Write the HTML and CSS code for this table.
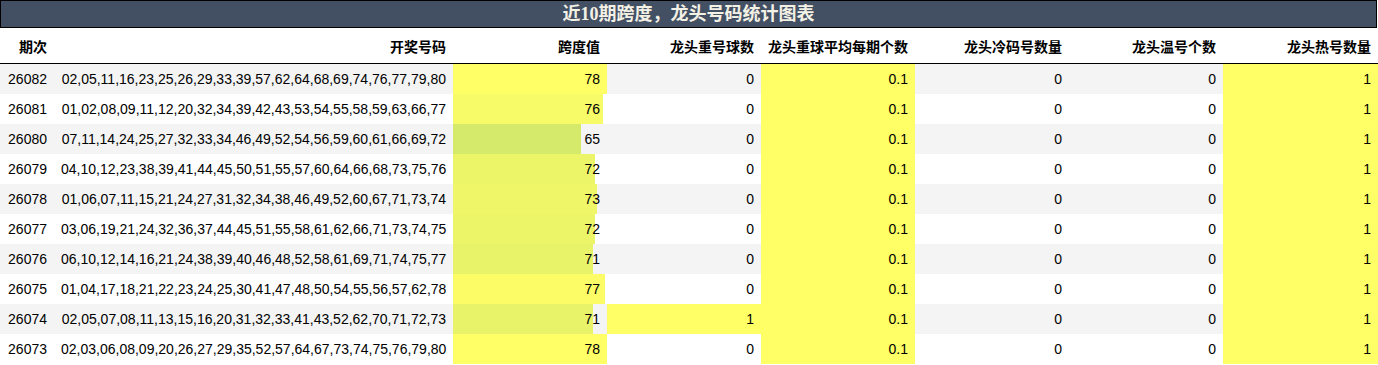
FILE: index.html
```html
<!DOCTYPE html>
<html lang="zh">
<head>
<meta charset="utf-8">
<title>近10期跨度，龙头号码统计图表</title>
<link rel="stylesheet" href="styles.css">
</head>
<body>
<div class="title">近10期跨度，龙头号码统计图表</div>
<table class="stats">
  <colgroup>
    <col class="c-id"><col class="c-nums"><col class="c-num"><col class="c-num"><col class="c-num"><col class="c-num"><col class="c-num"><col class="c-last">
  </colgroup>
  <thead>
    <tr><th>期次</th><th>开奖号码</th><th>跨度值</th><th>龙头重号球数</th><th>龙头重球平均每期个数</th><th>龙头冷码号数量</th><th>龙头温号个数</th><th>龙头热号数量</th></tr>
  </thead>
  <tbody>
    <tr><td>26082</td><td>02,05,11,16,23,25,26,29,33,39,57,62,64,68,69,74,76,77,79,80</td><td style="background-image:linear-gradient(90deg,rgb(255,255,102) 100%,transparent 100%)">78</td><td>0</td><td class="hl">0.1</td><td>0</td><td>0</td><td class="hl">1</td></tr>
    <tr><td>26081</td><td>01,02,08,09,11,12,20,32,34,39,42,43,53,54,55,58,59,63,66,77</td><td style="background-image:linear-gradient(90deg,rgb(247,251,103) 97.4%,transparent 97.4%)">76</td><td>0</td><td class="hl">0.1</td><td>0</td><td>0</td><td class="hl">1</td></tr>
    <tr><td>26080</td><td>07,11,14,24,25,27,32,33,34,46,49,52,54,56,59,60,61,66,69,72</td><td style="background-image:linear-gradient(90deg,rgb(213,233,107) 83.3%,transparent 83.3%)">65</td><td>0</td><td class="hl">0.1</td><td>0</td><td>0</td><td class="hl">1</td></tr>
    <tr><td>26079</td><td>04,10,12,23,38,39,41,44,45,50,51,55,57,60,64,66,68,73,75,76</td><td style="background-image:linear-gradient(90deg,rgb(236,245,104) 92.3%,transparent 92.3%)">72</td><td>0</td><td class="hl">0.1</td><td>0</td><td>0</td><td class="hl">1</td></tr>
    <tr><td>26078</td><td>01,06,07,11,15,21,24,27,31,32,34,38,46,49,52,60,67,71,73,74</td><td style="background-image:linear-gradient(90deg,rgb(239,247,104) 93.6%,transparent 93.6%)">73</td><td>0</td><td class="hl">0.1</td><td>0</td><td>0</td><td class="hl">1</td></tr>
    <tr><td>26077</td><td>03,06,19,21,24,32,36,37,44,45,51,55,58,61,62,66,71,73,74,75</td><td style="background-image:linear-gradient(90deg,rgb(236,245,104) 92.3%,transparent 92.3%)">72</td><td>0</td><td class="hl">0.1</td><td>0</td><td>0</td><td class="hl">1</td></tr>
    <tr><td>26076</td><td>06,10,12,14,16,21,24,38,39,40,46,48,52,58,61,69,71,74,75,77</td><td style="background-image:linear-gradient(90deg,rgb(232,243,105) 91%,transparent 91%)">71</td><td>0</td><td class="hl">0.1</td><td>0</td><td>0</td><td class="hl">1</td></tr>
    <tr><td>26075</td><td>01,04,17,18,21,22,23,24,25,30,41,47,48,50,54,55,56,57,62,78</td><td style="background-image:linear-gradient(90deg,rgb(252,253,102) 98.7%,transparent 98.7%)">77</td><td>0</td><td class="hl">0.1</td><td>0</td><td>0</td><td class="hl">1</td></tr>
    <tr><td>26074</td><td>02,05,07,08,11,13,15,16,20,31,32,33,41,43,52,62,70,71,72,73</td><td style="background-image:linear-gradient(90deg,rgb(232,243,105) 91%,transparent 91%)">71</td><td class="hl">1</td><td class="hl">0.1</td><td>0</td><td>0</td><td class="hl">1</td></tr>
    <tr><td>26073</td><td>02,03,06,08,09,20,26,27,29,35,52,57,64,67,73,74,75,76,79,80</td><td style="background-image:linear-gradient(90deg,rgb(255,255,102) 100%,transparent 100%)">78</td><td>0</td><td class="hl">0.1</td><td>0</td><td>0</td><td class="hl">1</td></tr>
  </tbody>
</table>
</body>
</html>
```
FILE: styles.css
```css
html, body {
  margin: 0;
  padding: 0;
  background: #ffffff;
}

body {
  width: 1378px;
  font-family: "Liberation Sans", "Noto Sans CJK SC", sans-serif;
  color: #000000;
}

.title {
  box-sizing: border-box;
  width: 1377px;
  height: 28px;
  border: 1px solid #000000;
  background: #435064;
  color: #f3f0e6;
  font-family: "Liberation Serif", "Noto Sans CJK SC", serif;
  font-weight: bold;
  font-size: 18px;
  line-height: 26px;
  text-align: center;
}

.stats {
  width: 1378px;
  table-layout: fixed;
  border-collapse: collapse;
  border-spacing: 0;
  font-size: 14px;
}

.c-id { width: 54px; }
.c-nums { width: 399px; }
.c-num { width: 154px; }
.c-last { width: 155px; }

.stats th,
.stats td {
  padding: 0 7px;
  text-align: right;
  vertical-align: middle;
  white-space: nowrap;
  overflow: hidden;
}

.stats th {
  height: 35px;
  font-weight: bold;
  border-bottom: 1px solid #000000;
  font-family: "Liberation Sans", "Noto Sans CJK SC", sans-serif;
}

.stats td {
  height: 30px;
  background-repeat: no-repeat;
}

.stats tbody tr:nth-child(odd) td {
  background-color: #f4f4f4;
}

.stats tbody tr:nth-child(even) td {
  background-color: #ffffff;
}

.stats tbody tr td.hl {
  background-color: #ffff66;
}
```
